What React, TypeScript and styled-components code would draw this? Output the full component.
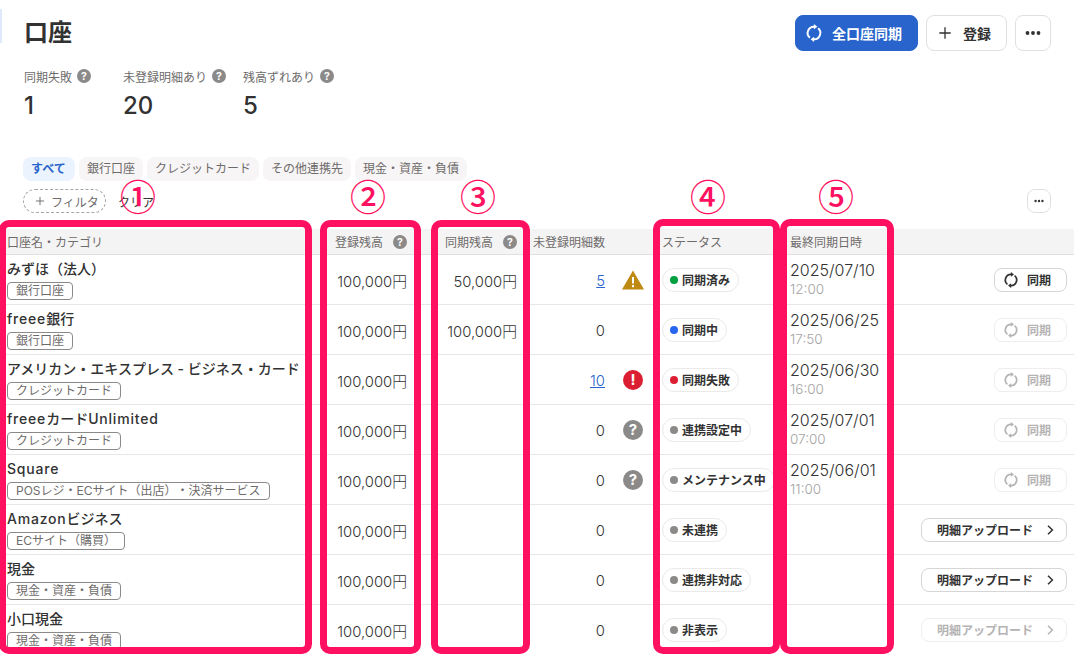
import React from 'react';
import styled, {createGlobalStyle} from 'styled-components';

const GlobalStyle = createGlobalStyle`
  html, body {
    margin: 0;
    padding: 0;
    background: #fff;
    overflow: hidden;
  }
  body {
    font-family: Inter, 'Noto Sans CJK JP', sans-serif;
    color: #323232;
    text-spacing-trim: space-all;
  }
  * {
    box-sizing: border-box;
  }
`;

const COLUMNS = '327px 88px 110px 88px 41px 128px 108px 184px';
const PINK = '#ff1060';

const Page = styled.div`
  position: relative;
  width: 1074px;
  height: 654px;
  overflow: hidden;
`;

const EdgeMark = styled.div`
  position: absolute;
  left: 0;
  top: 9px;
  width: 2px;
  height: 34px;
  background: #dfe9fb;
`;

const TopBar = styled.header`
  display: flex;
  align-items: center;
  justify-content: space-between;
  height: 36px;
  margin-top: 15px;
  padding: 0 23px 0 24px;
`;

const Title = styled.h1`
  margin: 0;
  font-size: 24px;
  line-height: 36px;
  font-weight: 700;
  color: #323232;
`;

const Actions = styled.div`
  display: flex;
  gap: 8px;
`;

const TopButton = styled.button<{$primary?: boolean}>`
  display: flex;
  align-items: center;
  height: 36px;
  padding: ${(p) => (p.$primary ? '0 15px 0 9px' : '0 15px 0 11px')};
  gap: ${(p) => (p.$primary ? '9px' : '11px')};
  border-radius: 8px;
  border: 1px solid ${(p) => (p.$primary ? '#2864cb' : '#e1dfdf')};
  background: ${(p) => (p.$primary ? '#2864cb' : '#fff')};
  color: ${(p) => (p.$primary ? '#fff' : '#323232')};
  font: 700 14px Inter, 'Noto Sans CJK JP', sans-serif;
`;

const MoreButton = styled.button<{$small?: boolean}>`
  display: flex;
  align-items: center;
  justify-content: center;
  width: ${(p) => (p.$small ? '24px' : '36px')};
  height: ${(p) => (p.$small ? '24px' : '36px')};
  padding: 0;
  border-radius: 8px;
  border: 1px solid #e1dfdf;
  background: #fff;
  color: #323232;
`;

const Stats = styled.section`
  display: grid;
  grid-template-columns: 99px 120px auto;
  margin-top: 16px;
  padding-left: 24px;
`;

const StatLabel = styled.div`
  display: flex;
  align-items: center;
  gap: 5px;
  height: 18px;
  font-size: 12px;
  color: #6e6b6b;
`;

const StatValue = styled.div`
  margin-top: 6px;
  font-size: 24px;
  line-height: 30px;
  font-weight: 500;
  color: #323232;
`;

const Tabs = styled.nav`
  display: flex;
  gap: 4px;
  margin-top: 36px;
  padding-left: 23px;
`;

const Tab = styled.div<{$active?: boolean}>`
  height: 24px;
  min-width: 52px;
  padding: 0 8px;
  border-radius: 8px;
  font-size: 12px;
  line-height: 24px;
  background: ${(p) => (p.$active ? '#ebf3ff' : '#f7f5f5')};
  color: ${(p) => (p.$active ? '#2864cb' : '#6e6b6b')};
  font-weight: ${(p) => (p.$active ? 700 : 400)};
`;

const FilterRow = styled.div`
  display: flex;
  align-items: center;
  height: 24px;
  margin-top: 8px;
  padding: 0 23px;
`;

const FilterChip = styled.div`
  display: flex;
  align-items: center;
  gap: 6px;
  width: 83px;
  height: 24px;
  padding-left: 11px;
  border: 1px dashed #a5a3a3;
  border-radius: 12px;
  font-size: 12px;
  color: #6e6b6b;
`;

const ClearLink = styled.span`
  margin-left: 12px;
  font-size: 12px;
  color: #323232;
`;

const FilterMore = styled.div`
  margin-left: auto;
`;

const Table = styled.div`
  margin-top: 16px;
`;

const HeadRow = styled.div`
  display: grid;
  grid-template-columns: ${COLUMNS};
  height: 26px;
  background: #f5f4f4;
  border-bottom: 1px solid #e1dfdf;
`;

const HeadCell = styled.div<{$end?: boolean}>`
  display: flex;
  align-items: center;
  justify-content: ${(p) => (p.$end ? 'flex-end' : 'flex-start')};
  gap: 10px;
  padding: 0 8px;
  font-size: 12px;
  color: #6e6b6b;
  white-space: nowrap;
`;

const FirstHeadCell = styled(HeadCell)`
  padding-left: 7px;
`;

const Row = styled.div`
  display: grid;
  grid-template-columns: ${COLUMNS};
  height: 50px;
  border-bottom: 1px solid #e8e6e6;
`;

const NameCell = styled.div`
  padding: 4px 0 0 7px;
  white-space: nowrap;
`;

const AccountName = styled.div`
  font-size: 14px;
  line-height: 20px;
  font-weight: 500;
  color: #323232;
`;

const Latin = styled.span`
  letter-spacing: 0.8px;
`;

const Category = styled.span`
  display: inline-block;
  height: 18px;
  margin-top: 2px;
  padding: 0 8px;
  border: 1px solid #8c8989;
  border-radius: 4px;
  font-size: 12px;
  line-height: 16px;
  color: #6e6b6b;
`;

const Amount = styled.div`
  display: flex;
  align-items: center;
  justify-content: flex-end;
  padding: 2px 8px 0;
  font-size: 14.8px;
  font-weight: 300;
  color: #323232;
`;

const CountLink = styled.a`
  color: #2864cb;
  text-decoration: underline;
`;

const IconCell = styled.div`
  display: flex;
  align-items: center;
  justify-content: center;
  padding-right: 1px;
`;

const StatusCell = styled.div`
  display: flex;
  align-items: center;
  padding-left: 8px;
`;

const StatusPill = styled.div`
  display: flex;
  align-items: center;
  gap: 4px;
  height: 24px;
  padding: 0 8px 0 7px;
  border: 1px solid #ebe9e9;
  border-radius: 12px;
  font-size: 12px;
  font-weight: 700;
  color: #323232;
  white-space: nowrap;
`;

const Dot = styled.span<{$color: string}>`
  width: 8px;
  height: 8px;
  border-radius: 50%;
  background: ${(p) => p.$color};
`;

const DateCell = styled.div`
  padding: 5px 0 0 8px;
`;

const DateText = styled.div`
  font-size: 16px;
  line-height: 20px;
  font-weight: 300;
  color: #323232;
`;

const TimeText = styled.div`
  font-size: 13.5px;
  line-height: 18px;
  font-weight: 300;
  color: #a5a3a3;
`;

const ActionCell = styled.div`
  display: flex;
  align-items: center;
  justify-content: flex-end;
  padding-right: 7px;
`;

const RowButton = styled.button<{$disabled?: boolean}>`
  display: flex;
  align-items: center;
  height: 24px;
  padding: 0 15px 0 8px;
  gap: 8px;
  border-radius: 8px;
  border: 1px solid ${(p) => (p.$disabled ? '#efeded' : '#d7d5d5')};
  background: #fff;
  color: ${(p) => (p.$disabled ? '#b5b3b3' : '#323232')};
  font: 700 12px Inter, 'Noto Sans CJK JP', sans-serif;
`;

const UploadButton = styled(RowButton)`
  padding: 0 10px 0 15px;
  gap: 11px;
`;

const Frame = styled.div<{$left: number; $right: number; $top: number}>`
  position: absolute;
  top: ${(p) => p.$top}px;
  bottom: 0;
  left: ${(p) => p.$left}px;
  width: ${(p) => p.$right - p.$left}px;
  border: 7px solid ${PINK};
  border-radius: 10px;
  pointer-events: none;
`;

const Mark = styled.div<{$x: number}>`
  position: absolute;
  top: 172px;
  left: ${(p) => p.$x - 24}px;
  width: 48px;
  text-align: center;
  font: 500 36px/46px 'Noto Sans CJK JP', sans-serif;
  color: ${PINK};
`;

const SyncIcon = ({size = 16}: {size?: number}) => (
  <svg width={size} height={size} viewBox='0 0 16 16' fill='none'>
    <path d='M8.4 2.4A5.6 5.6 0 0 0 4.4 12.3' stroke='currentColor' strokeWidth='1.7' />
    <path d='M7.9 0.1L11 2.4L7.9 4.7Z' fill='currentColor' />
    <path d='M7.6 13.6A5.6 5.6 0 0 0 11.6 3.7' stroke='currentColor' strokeWidth='1.7' />
    <path d='M8.1 15.9L5 13.6L8.1 11.3Z' fill='currentColor' />
  </svg>
);

const PlusIcon = ({size}: {size: number}) => (
  <svg width={size} height={size} viewBox='0 0 16 16' fill='none'>
    <path d='M8 1.5V14.5M1.5 8H14.5' stroke='currentColor' strokeWidth='1.5' />
  </svg>
);

const DotsIcon = ({size}: {size: number}) => (
  <svg width={size} height={size} viewBox='0 0 16 16' fill='currentColor'>
    <circle cx='2.5' cy='8' r='1.9' />
    <circle cx='8' cy='8' r='1.9' />
    <circle cx='13.5' cy='8' r='1.9' />
  </svg>
);

const ChevronIcon = () => (
  <svg width='12' height='12' viewBox='0 0 12 12' fill='none'>
    <path d='M4 1.8L8.4 6L4 10.2' stroke='currentColor' strokeWidth='1.5' />
  </svg>
);

const CircleMark = ({size, color, glyph}: {size: number; color: string; glyph: string}) => (
  <svg width={size} height={size} viewBox='0 0 20 20' style={{flexShrink: 0}}>
    <circle cx='10' cy='10' r='10' fill={color} />
    <text
      x='10'
      y='15.2'
      textAnchor='middle'
      fontSize='15'
      fontWeight='700'
      fontFamily='Inter, sans-serif'
      fill='#fff'>
      {glyph}
    </text>
  </svg>
);

const HelpIcon = ({size = 14}: {size?: number}) => (
  <CircleMark size={size} color='#8c8989' glyph='?' />
);

const WarningIcon = () => (
  <svg width='22' height='20' viewBox='0 0 22 20'>
    <path d='M11 0.5L22 19.5H0Z' fill='#bf8a14' />
    <rect x='10' y='7' width='2' height='6.5' fill='#fff' />
    <rect x='10' y='15' width='2' height='2.2' fill='#fff' />
  </svg>
);

const GREEN = '#00a040';
const BLUE = '#2864f0';
const RED = '#dc1e32';
const GRAY = '#8c8989';

type Account = {
  name: string;
  category: string;
  synced?: string;
  count: string;
  link?: boolean;
  alert?: 'warn' | 'error' | 'help';
  status: string;
  dot: string;
  date?: string;
  time?: string;
  action: 'sync' | 'syncOff' | 'upload' | 'uploadOff';
};

const accounts: Account[] = [
  {name: 'みずほ（法人）', category: '銀行口座', synced: '50,000円', count: '5', link: true, alert: 'warn', status: '同期済み', dot: GREEN, date: '2025/07/10', time: '12:00', action: 'sync'},
  {name: 'freee銀行', category: '銀行口座', synced: '100,000円', count: '0', status: '同期中', dot: BLUE, date: '2025/06/25', time: '17:50', action: 'syncOff'},
  {name: 'アメリカン・エキスプレス - ビジネス・カード', category: 'クレジットカード', count: '10', link: true, alert: 'error', status: '同期失敗', dot: RED, date: '2025/06/30', time: '16:00', action: 'syncOff'},
  {name: 'freeeカードUnlimited', category: 'クレジットカード', count: '0', alert: 'help', status: '連携設定中', dot: GRAY, date: '2025/07/01', time: '07:00', action: 'syncOff'},
  {name: 'Square', category: 'POSレジ・ECサイト（出店）・決済サービス', count: '0', alert: 'help', status: 'メンテナンス中', dot: GRAY, date: '2025/06/01', time: '11:00', action: 'syncOff'},
  {name: 'Amazonビジネス', category: 'ECサイト（購買）', count: '0', status: '未連携', dot: GRAY, action: 'upload'},
  {name: '現金', category: '現金・資産・負債', count: '0', status: '連携非対応', dot: GRAY, action: 'upload'},
  {name: '小口現金', category: '現金・資産・負債', count: '0', status: '非表示', dot: GRAY, action: 'uploadOff'},
];

const tabs = ['すべて', '銀行口座', 'クレジットカード', 'その他連携先', '現金・資産・負債'];

const frames = [
  {left: -1, right: 312, top: 220},
  {left: 320, right: 421, top: 220},
  {left: 431, right: 530, top: 220},
  {left: 653, right: 780, top: 219},
  {left: 780, right: 894, top: 219},
];

const marks = [
  {x: 138, text: '①'},
  {x: 368, text: '②'},
  {x: 478, text: '③'},
  {x: 708, text: '④'},
  {x: 836, text: '⑤'},
];

const NameText = ({name}: {name: string}) => (
  <AccountName>
    {name.split(/([A-Za-z]+)/).map((part, i) =>
      i % 2 === 1 ? <Latin key={i}>{part}</Latin> : part,
    )}
  </AccountName>
);

const AlertIcon = ({kind}: {kind?: Account['alert']}) => {
  if (kind === 'warn') return <WarningIcon />;
  if (kind === 'error') return <CircleMark size={20} color={RED} glyph='!' />;
  if (kind === 'help') return <HelpIcon size={20} />;
  return null;
};

const RowAction = ({action}: {action: Account['action']}) => {
  if (action === 'sync' || action === 'syncOff') {
    return (
      <RowButton $disabled={action === 'syncOff'}>
        <SyncIcon />
        同期
      </RowButton>
    );
  }
  return (
    <UploadButton $disabled={action === 'uploadOff'}>
      明細アップロード
      <ChevronIcon />
    </UploadButton>
  );
};

export default function App() {
  return (
    <Page>
      <GlobalStyle />
      <EdgeMark />
      <TopBar>
        <Title>口座</Title>
        <Actions>
          <TopButton $primary>
            <SyncIcon size={18} />
            全口座同期
          </TopButton>
          <TopButton>
            <PlusIcon size={14} />
            登録
          </TopButton>
          <MoreButton>
            <DotsIcon size={16} />
          </MoreButton>
        </Actions>
      </TopBar>

      <Stats>
        <div>
          <StatLabel>同期失敗 <HelpIcon /></StatLabel>
          <StatValue>1</StatValue>
        </div>
        <div>
          <StatLabel>未登録明細あり <HelpIcon /></StatLabel>
          <StatValue>20</StatValue>
        </div>
        <div>
          <StatLabel>残高ずれあり <HelpIcon /></StatLabel>
          <StatValue>5</StatValue>
        </div>
      </Stats>

      <Tabs>
        {tabs.map((tab, i) => (
          <Tab key={tab} $active={i === 0}>{tab}</Tab>
        ))}
      </Tabs>

      <FilterRow>
        <FilterChip>
          <PlusIcon size={10} />
          フィルタ
        </FilterChip>
        <ClearLink>クリア</ClearLink>
        <FilterMore>
          <MoreButton $small>
            <DotsIcon size={10} />
          </MoreButton>
        </FilterMore>
      </FilterRow>

      <Table>
        <HeadRow>
          <FirstHeadCell>口座名・カテゴリ</FirstHeadCell>
          <HeadCell $end>登録残高 <HelpIcon /></HeadCell>
          <HeadCell $end>同期残高 <HelpIcon /></HeadCell>
          <HeadCell>未登録明細数</HeadCell>
          <HeadCell />
          <HeadCell>ステータス</HeadCell>
          <HeadCell>最終同期日時</HeadCell>
          <HeadCell />
        </HeadRow>
        {accounts.map((a) => (
          <Row key={a.name}>
            <NameCell>
              <NameText name={a.name} />
              <Category>{a.category}</Category>
            </NameCell>
            <Amount>100,000円</Amount>
            <Amount>{a.synced}</Amount>
            <Amount>
              {a.link ? <CountLink href='#'>{a.count}</CountLink> : a.count}
            </Amount>
            <IconCell>
              <AlertIcon kind={a.alert} />
            </IconCell>
            <StatusCell>
              <StatusPill>
                <Dot $color={a.dot} />
                {a.status}
              </StatusPill>
            </StatusCell>
            <DateCell>
              <DateText>{a.date}</DateText>
              <TimeText>{a.time}</TimeText>
            </DateCell>
            <ActionCell>
              <RowAction action={a.action} />
            </ActionCell>
          </Row>
        ))}
      </Table>

      {frames.map((f) => (
        <Frame key={f.left} $left={f.left} $right={f.right} $top={f.top} />
      ))}
      {marks.map((m) => (
        <Mark key={m.x} $x={m.x}>{m.text}</Mark>
      ))}
    </Page>
  );
}
